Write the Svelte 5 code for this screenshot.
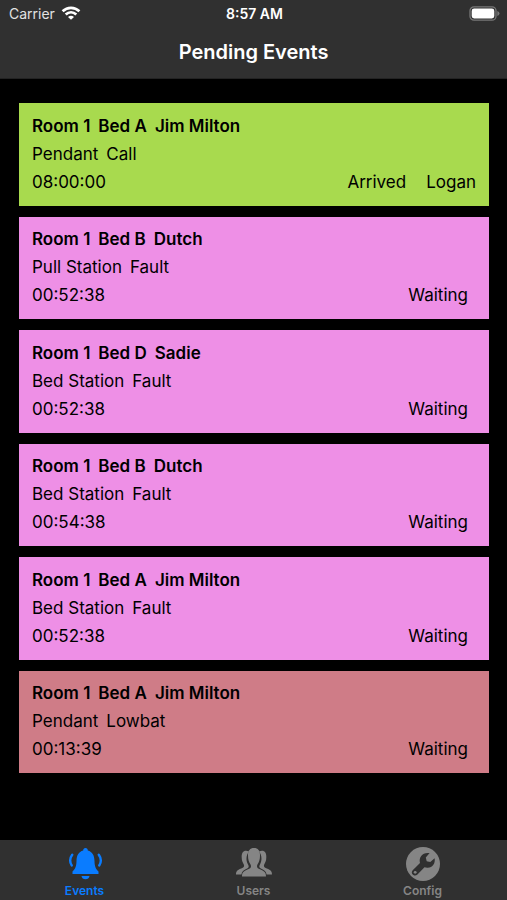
<script>
  let activeTab = 'events';

  const events = [
    { room: 'Room 1', bed: 'Bed A', name: 'Jim Milton', device: 'Pendant', type: 'Call', time: '08:00:00', status: 'Arrived', staff: 'Logan' },
    { room: 'Room 1', bed: 'Bed B', name: 'Dutch', device: 'Pull Station', type: 'Fault', time: '00:52:38', status: 'Waiting' },
    { room: 'Room 1', bed: 'Bed D', name: 'Sadie', device: 'Bed Station', type: 'Fault', time: '00:52:38', status: 'Waiting' },
    { room: 'Room 1', bed: 'Bed B', name: 'Dutch', device: 'Bed Station', type: 'Fault', time: '00:54:38', status: 'Waiting' },
    { room: 'Room 1', bed: 'Bed A', name: 'Jim Milton', device: 'Bed Station', type: 'Fault', time: '00:52:38', status: 'Waiting' },
    { room: 'Room 1', bed: 'Bed A', name: 'Jim Milton', device: 'Pendant', type: 'Lowbat', time: '00:13:39', status: 'Waiting' }
  ];
</script>

<div class="app">
  <header>
    <div class="status-bar">
      <div class="carrier">
        <span>Carrier</span>
        <svg width="20" height="14" viewBox="0 0 20 14" fill="none" stroke="#fff" stroke-width="2.7">
          <path d="M1.6 5.3 C6.4 .7 13.6 .7 18.4 5.3" />
          <path d="M4.7 8.6 C7.8 5.7 12.2 5.7 15.3 8.6" />
          <path d="M7 10.9 Q10 8.6 13 10.9 L10 13.8 Z" fill="#fff" stroke="none" />
        </svg>
      </div>
      <time>8:57 AM</time>
      <div class="battery">
        <svg width="31" height="15" viewBox="0 0 31 15">
          <rect x="1" y=".8" width="26" height="13.4" rx="4" fill="none" stroke="#777" stroke-width="1.3" />
          <rect x="2.7" y="2.5" width="22.6" height="10" rx="2.4" fill="#fff" />
          <path d="M28.3 5 Q30.5 5.6 30.5 7.5 T28.3 10 Z" fill="#777" />
        </svg>
      </div>
    </div>
    <h1>Pending Events</h1>
  </header>

  <main>
    <ul>
      {#each events as event}
        <li class="card" class:call={event.type === 'Call'} class:lowbat={event.type === 'Lowbat'}>
          <h2 class="line">
            <span>{event.room}</span>
            <span>{event.bed}</span>
            <span>{event.name}</span>
          </h2>
          <div class="line">
            <span>{event.device}</span>
            <span>{event.type}</span>
          </div>
          <div class="line">
            <span>{event.time}</span>
            <span class="status" class:alone={!event.staff}>{event.status}</span>
            {#if event.staff}
              <span class="staff">{event.staff}</span>
            {/if}
          </div>
        </li>
      {/each}
    </ul>
  </main>

  <nav>
    <button class:active={activeTab === 'events'} on:click={() => (activeTab = 'events')}>
      <svg width="36" height="34" viewBox="0 0 36 34" fill="currentColor">
        <path d="M18.5 1 C20 1 20.8 2 20.8 3.5 C25.5 4.8 27.4 8.5 27.5 14 C27.6 19.5 28.7 21.8 31.5 24.5 V27 H5.5 V24.5 C8.3 21.8 9.4 19.5 9.5 14 C9.6 8.5 11.5 4.8 16.2 3.5 C16.2 2 17 1 18.5 1 Z" />
        <path d="M14.5 29 H22.5 C22.1 31.2 20.7 32.3 18.5 32.3 C16.3 32.3 14.9 31.2 14.5 29 Z" />
        <path d="M5.2 7.8 Q1.4 13 4.7 18.4 M31.8 7.8 Q35.6 13 32.3 18.4" fill="none" stroke="currentColor" stroke-width="2.4" stroke-linecap="round" />
      </svg>
      <span>Events</span>
    </button>
    <button class:active={activeTab === 'users'} on:click={() => (activeTab = 'users')}>
      <svg width="38" height="34" viewBox="0 0 38 34" fill="currentColor">
        <path d="M14 4.5 C9 2.5 6.4 5.3 6.7 10.5 C6.7 13.8 7.8 15.8 8.8 17.4 C9.6 19.2 8.7 20.6 6.2 21.6 C2 23.3 1 24.6 1 27.5 H6.4 C6.9 24 9 22.8 12.6 21.2 C14 20.4 14 19 12.9 17.2 C10.9 13.5 10.9 8.4 14 4.5 Z" />
        <path d="M24 4.5 C29 2.5 31.6 5.3 31.3 10.5 C31.3 13.8 30.2 15.8 29.2 17.4 C28.4 19.2 29.3 20.6 31.8 21.6 C36 23.3 37 24.6 37 27.5 H31.6 C31.1 24 29 22.8 25.4 21.2 C24 20.4 24 19 25.1 17.2 C27.1 13.5 27.1 8.4 24 4.5 Z" />
        <path d="M19 1 C23.3 1 25.2 4 25 8.5 C25 12.4 24.1 15.2 22.6 17.2 C21.5 19.2 21.9 21 24.4 22.1 C29.4 24.2 31 25.2 31 29.5 H7 C7 25.2 8.6 24.2 13.6 22.1 C16.1 21 16.5 19.2 15.4 17.2 C13.9 15.2 13 12.4 13 8.5 C12.8 4 14.7 1 19 1 Z" />
      </svg>
      <span>Users</span>
    </button>
    <button class:active={activeTab === 'config'} on:click={() => (activeTab = 'config')}>
      <svg width="36" height="34" viewBox="0 0 36 34">
        <circle cx="18" cy="17" r="17" fill="currentColor" />
        <path d="M24.6 6.1 L20.8 10.4 L21.7 14.2 L25.3 15 L29.6 11.2 C30.6 16.2 27.6 20.6 22.8 20.8 C21.4 20.9 20.4 20.6 19.5 20.3 L12.2 27.8 C9.2 30.4 5 26.2 7.7 23.3 L15 16 C13.4 9.8 18 4.8 24.6 6.1 Z" fill="#303030" />
        <circle cx="10.2" cy="25.3" r="1.4" fill="currentColor" />
      </svg>
      <span>Config</span>
    </button>
  </nav>
</div>

<style>
:global(body) {
  margin: 0;
  background: #000;
}

.app {
  display: flex;
  flex-direction: column;
  min-height: 100vh;
  background: #000;
  font-family: Inter, "Liberation Sans", sans-serif;
}

header {
  background: #303030;
  color: #fff;
  padding-bottom: 12px;
  border-bottom: 1px solid #232323;
}

.status-bar {
  display: grid;
  grid-template-columns: 1fr auto 1fr;
  align-items: center;
  height: 26px;
  padding: 0 7px 0 9px;
  font-size: 14px;
}

.carrier {
  display: flex;
  align-items: center;
  gap: 6px;
  color: #e2e2e2;
}

time {
  font-weight: 600;
}

.battery {
  display: flex;
  justify-content: flex-end;
}

h1 {
  margin: 0;
  padding-top: 12px;
  font-size: 20px;
  line-height: 28px;
  font-weight: 600;
  text-align: center;
}

main {
  flex: 1;
  display: flex;
  padding: 24px 18px 67px 19px;
}

ul {
  flex: 1;
  display: flex;
  flex-direction: column;
  gap: 11px;
  margin: 0;
  padding: 0;
  list-style: none;
}

.card {
  flex: 1;
  display: flex;
  flex-direction: column;
  justify-content: center;
  padding: 0 13px 1px;
  background: #ee8fe6;
  color: #000;
  font-size: 17px;
  line-height: 28px;
}

.card.call {
  background: #a8da4e;
}

.card.lowbat {
  background: #cf7c87;
}

.line {
  display: flex;
  gap: 8px;
  margin: 0;
}

h2 {
  font-size: 17px;
  font-weight: 600;
}

.status {
  margin-left: auto;
}

.status.alone {
  margin-right: 8px;
}

.staff {
  margin-left: 12px;
}

nav {
  display: flex;
  height: 60px;
  background: #303030;
}

button {
  flex: 1;
  display: flex;
  flex-direction: column;
  align-items: center;
  gap: 2px;
  padding: 7px 0 0;
  border: 0;
  background: none;
  color: #858585;
  font-family: inherit;
  font-size: 12px;
  line-height: 16px;
  font-weight: 600;
}

button.active {
  color: #0a7cff;
}
</style>
